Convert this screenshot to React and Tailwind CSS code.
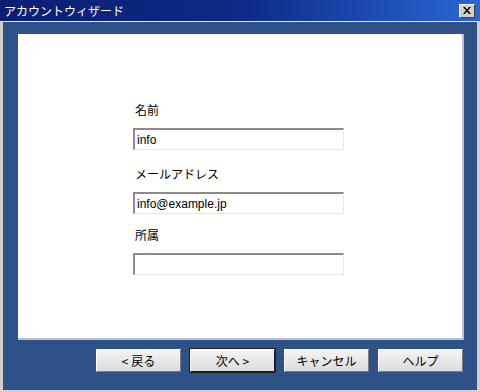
import { useState } from "react";

const font = { fontFamily: '"MS UI Gothic", "Noto Sans CJK JP", "Liberation Sans", sans-serif' };

const Field = ({ label, value, setter, className }) => (
  <div className={"flex flex-col " + (className || "")}>
    <div className="h-[12px] text-[12px] leading-[12px] pl-[2px] text-black">{label}</div>
    <input
      value={value}
      onChange={(e) => setter(e.target.value)}
      className="mt-[12px] w-[211px] h-[22px] px-[2px] text-[12px] text-black bg-white outline-none border-t-2 border-l-2 border-b border-r border-t-[#8c8c8c] border-l-[#8c8c8c] border-b-[#e8e8e8] border-r-[#e8e8e8]"
      style={{ fontFamily: '"Liberation Sans", "Noto Sans CJK JP", sans-serif' }}
    />
  </div>
);

const WizButton = ({ children, primary }) => (
  <button
    className={
      "w-[85px] h-[23px] text-[12px] text-black bg-[linear-gradient(#f4f4f4,#dcdcdc)] border border-t-white border-l-white " +
      (primary ? "border-b-[#1a1a1a] border-r-[#1a1a1a] outline outline-1 outline-[#202020]" : "border-b-[#7a7a7a] border-r-[#7a7a7a]")
    }
  >
    {children}
  </button>
);

export default () => {
  const [name, setName] = useState("info");
  const [mail, setMail] = useState("info@example.jp");
  const [group, setGroup] = useState("");

  return (
    <div className="w-[480px] h-[392px] flex flex-col bg-[#d4d0c8]" style={font}>
      {/* title bar */}
      <div className="h-[21px] flex items-center justify-between pl-[4px] pr-[5px] bg-[linear-gradient(90deg,#0a1f74_0%,#0c2a86_50%,#2b66d4_100%)]">
        <span className="text-white text-[12px] leading-[12px]">アカウントウィザード</span>
        <button className="w-[16px] h-[14px] flex items-center justify-center bg-[#d4d0c8] border border-t-white border-l-white border-b-[#404040] border-r-[#404040]">
          <svg width="8" height="7" viewBox="0 0 8 7">
            <path d="M0 0h2l2 2.5L6 0h2L5 3.5 8 7H6L4 4.5 2 7H0l3-3.5z" fill="#000" />
          </svg>
        </button>
      </div>

      <div className="h-[1px] bg-[#e8e8e8]" />

      {/* body */}
      <div className="flex-1 flex flex-col mx-[3px] mb-[2px] pl-[15px] pr-[14px] pt-[12px] bg-[repeating-linear-gradient(180deg,#32558c_0px,#32558c_1px,#2c4d82_1px,#2c4d82_2px)]">
        <div className="h-[306px] w-[446px] bg-white border-r-2 border-b-2 border-r-[#b8c0d0] border-b-[#b8c0d0] flex flex-col pl-[115px] pt-[70px]">
          <Field label="名前" value={name} setter={setName} />
          <Field label="メールアドレス" value={mail} setter={setMail} className="mt-[18px]" />
          <Field label="所属" value={group} setter={setGroup} className="mt-[15px]" />
        </div>

        <div className="flex justify-end gap-[9px] mt-[9px]">
          <WizButton>&lt; 戻る</WizButton>
          <WizButton primary>次へ &gt;</WizButton>
          <WizButton>キャンセル</WizButton>
          <WizButton>ヘルプ</WizButton>
        </div>
      </div>
    </div>
  );
};
